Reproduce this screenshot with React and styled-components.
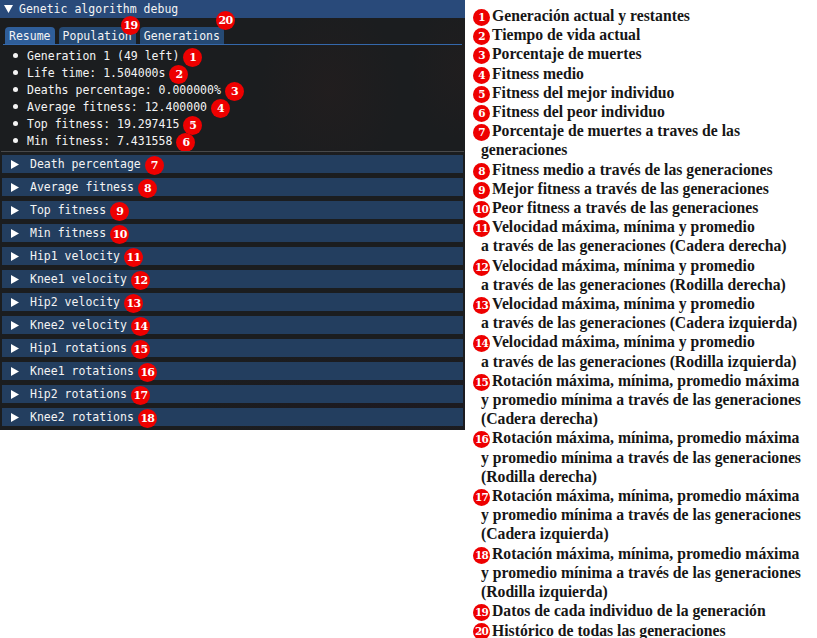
import React from "react";
import styled, { createGlobalStyle } from "styled-components";

const stats = [
  { text: "Generation 1 (49 left)", n: 1 },
  { text: "Life time: 1.504000s", n: 2 },
  { text: "Deaths percentage: 0.000000%", n: 3 },
  { text: "Average fitness: 12.400000", n: 4 },
  { text: "Top fitness: 19.297415", n: 5 },
  { text: "Min fitness: 7.431558", n: 6 },
];

const headers = [
  "Death percentage",
  "Average fitness",
  "Top fitness",
  "Min fitness",
  "Hip1 velocity",
  "Knee1 velocity",
  "Hip2 velocity",
  "Knee2 velocity",
  "Hip1 rotations",
  "Knee1 rotations",
  "Hip2 rotations",
  "Knee2 rotations",
];

const legend = [
  ["Generación actual y restantes"],
  ["Tiempo de vida actual"],
  ["Porcentaje de muertes"],
  ["Fitness medio"],
  ["Fitness del mejor individuo"],
  ["Fitness del peor individuo"],
  ["Porcentaje de muertes a traves de las", "generaciones"],
  ["Fitness medio a través de las generaciones"],
  ["Mejor fitness a través de las generaciones"],
  ["Peor fitness a través de las generaciones"],
  ["Velocidad máxima, mínima y promedio", "a través de las generaciones (Cadera derecha)"],
  ["Velocidad máxima, mínima y promedio", "a través de las generaciones (Rodilla derecha)"],
  ["Velocidad máxima, mínima y promedio", "a través de las generaciones (Cadera izquierda)"],
  ["Velocidad máxima, mínima y promedio", "a través de las generaciones (Rodilla izquierda)"],
  ["Rotación máxima, mínima, promedio máxima", "y promedio mínima a través de las generaciones", "(Cadera derecha)"],
  ["Rotación máxima, mínima, promedio máxima", "y promedio mínima a través de las generaciones", "(Rodilla derecha)"],
  ["Rotación máxima, mínima, promedio máxima", "y promedio mínima a través de las generaciones", "(Cadera izquierda)"],
  ["Rotación máxima, mínima, promedio máxima", "y promedio mínima a través de las generaciones", "(Rodilla izquierda)"],
  ["Datos de cada individuo de la generación"],
  ["Histórico de todas las generaciones"],
];

const App = () => (
  <>
    <GlobalStyle />
    <Page>
      <Panel>
        <TitleBar>
          <svg width="9" height="8" viewBox="0 0 9 8">
            <path d="M0 0 H9 L4.5 8 Z" fill="#fff" />
          </svg>
          <span>Genetic algorithm debug</span>
        </TitleBar>

        <TabBar>
          <Tab $active>Resume</Tab>
          <Tab>Population</Tab>
          <Tab>Generations</Tab>
          <FloatBadge $x={121} $y={16}>19</FloatBadge>
          <FloatBadge $x={216} $y={11}>20</FloatBadge>
        </TabBar>

        <StatList>
          {stats.map((s) => (
            <StatRow key={s.n}>
              <Bullet />
              <span>{s.text}</span>
              <Badge $gap={4}>{s.n}</Badge>
            </StatRow>
          ))}
        </StatList>

        <Separator />

        <HeaderList>
          {headers.map((h, i) => (
            <CollapseHeader key={h}>
              <svg width="8" height="9" viewBox="0 0 8 9">
                <path d="M0 0 L8 4.5 L0 9 Z" fill="#fff" />
              </svg>
              <span>{h}</span>
              <Badge $gap={4}>{i + 7}</Badge>
            </CollapseHeader>
          ))}
        </HeaderList>
      </Panel>

      <Legend>
        {legend.map((lines, i) => (
          <LegendItem key={i}>
            <LegendBadge>{i + 1}</LegendBadge>
            {lines.map((l, j) => (
              <React.Fragment key={j}>
                {j > 0 && <br />}
                {l}
              </React.Fragment>
            ))}
          </LegendItem>
        ))}
      </Legend>
    </Page>
  </>
);

export default App;

const GlobalStyle = createGlobalStyle`
  body {
    margin: 0;
    background: #fff;
  }
`;

const Page = styled.div`
  display: flex;
  align-items: flex-start;
`;

const Panel = styled.div`
  position: relative;
  width: 465px;
  height: 430px;
  flex-shrink: 0;
  display: flex;
  flex-direction: column;
  background:
    radial-gradient(ellipse 70px 90px at 330px 90px, rgba(38, 30, 30, 0.55), transparent),
    radial-gradient(ellipse 50px 70px at 460px 70px, rgba(36, 30, 30, 0.5), transparent),
    radial-gradient(ellipse 200px 60px at 380px 400px, rgba(30, 22, 34, 0.5), transparent),
    #1b1d1f;
  font-family: "DejaVu Sans Mono", "Liberation Mono", monospace;
  font-size: 11.5px;
  color: #f4f4f4;
`;

const TitleBar = styled.div`
  height: 18px;
  display: flex;
  align-items: center;
  gap: 6px;
  padding-left: 4px;
  background: #294a7a;
`;

const TabBar = styled.div`
  display: flex;
  gap: 4px;
  margin: 9px 3px 0;
  padding-left: 2px;
  border-bottom: 1px solid #3468ab;
`;

const Tab = styled.div`
  height: 17px;
  display: flex;
  align-items: center;
  padding: 0 4px;
  border-radius: 4px 4px 0 0;
  background: ${(p) => (p.$active ? "#2f5e99" : "#264a74")};
`;

const Badge = styled.span`
  display: inline-flex;
  align-items: center;
  justify-content: center;
  width: 19px;
  height: 19px;
  margin-left: ${(p) => p.$gap}px;
  margin-top: 3px;
  border-radius: 50%;
  background: #ee0000;
  color: #fff;
  font-family: "DejaVu Serif", "Liberation Serif", serif;
  font-weight: bold;
  font-size: 11px;
  letter-spacing: -0.7px;
  flex-shrink: 0;
`;

const FloatBadge = styled(Badge)`
  position: absolute;
  left: ${(p) => p.$x}px;
  top: ${(p) => p.$y}px;
  margin: 0;
`;

const StatList = styled.div`
  display: flex;
  flex-direction: column;
  padding-top: 2px;
`;

const StatRow = styled.div`
  height: 17px;
  display: flex;
  align-items: center;
  padding-left: 13px;
`;

const Bullet = styled.span`
  width: 5px;
  height: 5px;
  border-radius: 50%;
  background: #f4f4f4;
  margin-right: 9px;
`;

const Separator = styled.div`
  height: 1px;
  margin: 2px 1px 3px;
  background: #48494b;
`;

const HeaderList = styled.div`
  display: flex;
  flex-direction: column;
  gap: 5px;
  margin: 0 2px;
`;

const CollapseHeader = styled.div`
  height: 18px;
  display: flex;
  align-items: center;
  padding-left: 9px;
  background: #233e5f;

  > span:first-of-type {
    margin-left: 11px;
  }

  ${Badge} {
    margin-top: 2px;
  }
`;

const Legend = styled.div`
  margin-left: 8px;
  padding-top: 6px;
  font-family: "Liberation Serif", "DejaVu Serif", serif;
  font-weight: bold;
  font-size: 15.7px;
  line-height: 19.2px;
  color: #161616;
`;

const LegendItem = styled.div`
  padding-left: 8px;
  text-indent: -8px;
  white-space: nowrap;
`;

const LegendBadge = styled.span`
  display: inline-block;
  width: 17px;
  height: 17px;
  margin: -4px 2px -4px 0;
  vertical-align: middle;
  text-indent: 0;
  text-align: center;
  border-radius: 50%;
  background: #ee0000;
  color: #fff;
  font-family: "DejaVu Serif", "Liberation Serif", serif;
  font-weight: bold;
  font-size: 10.5px;
  letter-spacing: -0.7px;
  line-height: 17px;
`;
